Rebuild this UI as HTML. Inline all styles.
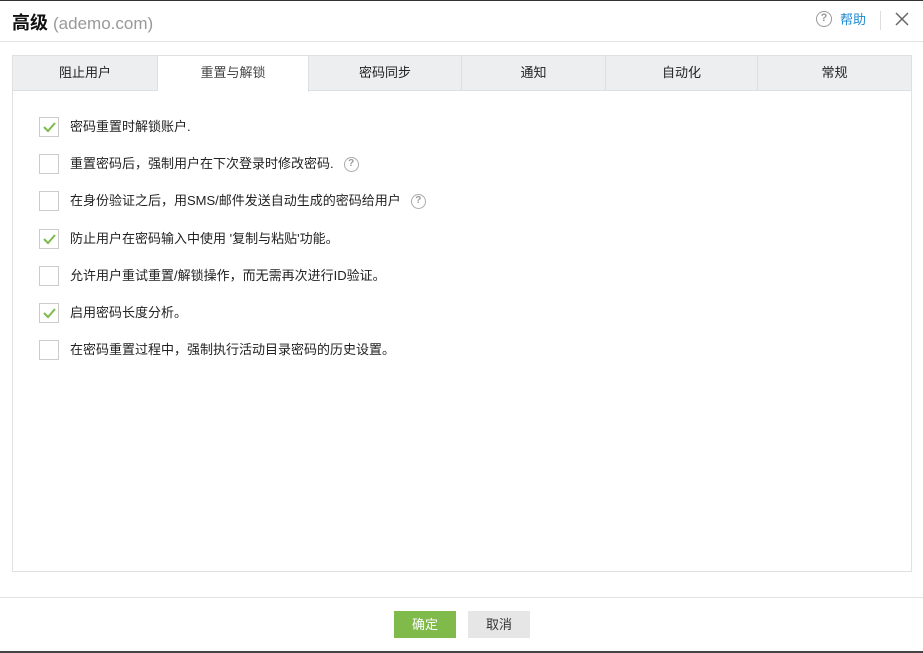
<!DOCTYPE html>
<html><head><meta charset="utf-8"><style>
*{margin:0;padding:0;box-sizing:border-box}
body{width:923px;height:653px;background:#fff;font-family:"Liberation Sans","Noto Sans CJK SC",sans-serif;position:relative;overflow:hidden;color:#222}
.top{position:absolute;left:0;top:0;width:923px;height:1px;background:#333}
.bot{position:absolute;left:0;top:651px;width:923px;height:2px;background:#444}
.title{position:absolute;left:12px;top:9px;font-size:18px;font-weight:bold;color:#111}
.title span{font-weight:normal;color:#999;font-size:17px}
.hline{position:absolute;left:0;top:41px;width:923px;height:1px;background:#e2e2e2}
.help{position:absolute;left:816px;top:10px;height:17px;font-size:13px;color:#1a8ad4;display:flex;align-items:center}
.help i{display:inline-block;width:16px;height:16px;border:1.5px solid #999;border-radius:50%;color:#999;font-style:normal;font-size:11px;text-align:center;line-height:13px;margin-right:8px;font-weight:bold}
.sep{position:absolute;left:880px;top:11px;width:1px;height:19px;background:#ddd}
.x{position:absolute;left:895px;top:12px}
.panel{position:absolute;left:12px;top:55px;width:900px;height:517px;border:1px solid #e0e0e0}
.tabs{position:absolute;left:0;top:0;width:898px;height:35px;background:#eceeef;border-bottom:1px solid #dde0e2}
.tab{position:absolute;top:0;height:35px;font-size:13px;text-align:center;line-height:34px;border-right:1px solid #dde0e2;color:#222}
.tab.act{background:#fff;height:36px;color:#444}
.row{position:absolute;left:26px;font-size:13px;color:#222;height:20px;line-height:20px}
.cb{position:absolute;left:0;top:0;width:20px;height:20px;border:1.5px solid #ccc;background:#fff}
.cb svg{position:absolute;left:1px;top:1px}
.row .t{position:absolute;left:31px;white-space:nowrap;display:flex;align-items:center;height:20px}
.q{display:inline-block;width:15px;height:15px;border:1.5px solid #aaa;border-radius:50%;color:#999;font-size:10px;text-align:center;line-height:12px;margin-left:10px;font-weight:bold}
.fline{position:absolute;left:0;top:597px;width:923px;height:1px;background:#e2e2e2}
.btn{position:absolute;top:611px;width:62px;height:27px;font-size:13px;text-align:center;line-height:27px}
</style></head><body>
<div class="top"></div>
<div class="title">高级 <span>(ademo.com)</span></div>
<div class="help"><i>?</i>帮助</div>
<div class="sep"></div>
<svg class="x" width="14" height="14"><path d="M1 1 L13 13 M13 1 L1 13" stroke="#666" stroke-width="1.5"/></svg>
<div class="hline"></div>
<div class="panel">
<div class="tabs">
<div class="tab" style="left:0;width:145px">阻止用户</div>
<div class="tab act" style="left:145px;width:151px">重置与解锁</div>
<div class="tab" style="left:296px;width:153px">密码同步</div>
<div class="tab" style="left:449px;width:144px">通知</div>
<div class="tab" style="left:593px;width:152px">自动化</div>
<div class="tab" style="left:745px;width:153px;border-right:none">常规</div>
</div>
<div class="row" style="top:61px"><div class="cb"><svg width="16" height="16"><path d="M3 8 L7 12 L14 4" stroke="#7dba4c" stroke-width="2" fill="none"/></svg></div><div class="t">密码重置时解锁账户.</div></div>
<div class="row" style="top:98px"><div class="cb"></div><div class="t">重置密码后，强制用户在下次登录时修改密码. <span class="q">?</span></div></div>
<div class="row" style="top:135px"><div class="cb"></div><div class="t">在身份验证之后，用SMS/邮件发送自动生成的密码给用户 <span class="q">?</span></div></div>
<div class="row" style="top:173px"><div class="cb"><svg width="16" height="16"><path d="M3 8 L7 12 L14 4" stroke="#7dba4c" stroke-width="2" fill="none"/></svg></div><div class="t">防止用户在密码输入中使用 '复制与粘贴'功能。</div></div>
<div class="row" style="top:210px"><div class="cb"></div><div class="t">允许用户重试重置/解锁操作，而无需再次进行ID验证。</div></div>
<div class="row" style="top:247px"><div class="cb"><svg width="16" height="16"><path d="M3 8 L7 12 L14 4" stroke="#7dba4c" stroke-width="2" fill="none"/></svg></div><div class="t">启用密码长度分析。</div></div>
<div class="row" style="top:284px"><div class="cb"></div><div class="t">在密码重置过程中，强制执行活动目录密码的历史设置。</div></div>
</div>
<div class="fline"></div>
<div class="btn" style="left:394px;background:#7fba4a;color:#fff">确定</div>
<div class="btn" style="left:468px;background:#e6e6e6;color:#333">取消</div>
<div class="bot"></div>
</body></html>
